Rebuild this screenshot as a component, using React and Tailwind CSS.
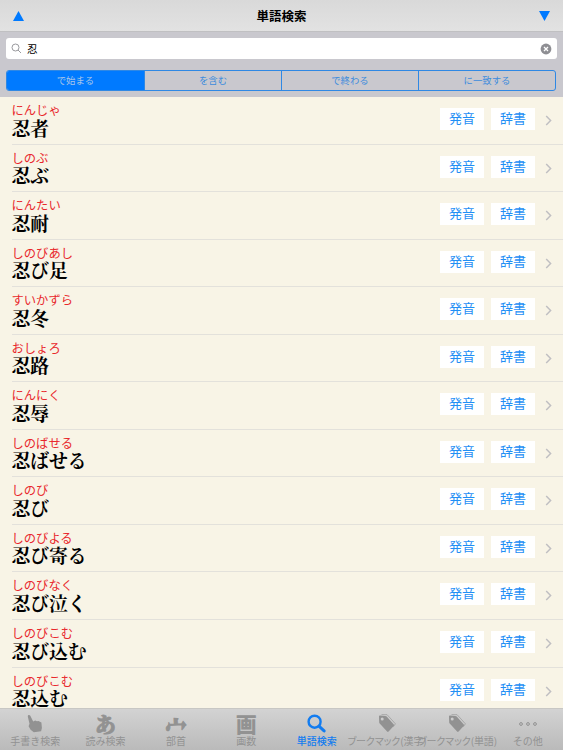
import { useState } from 'react';
import clsx from 'clsx';

const WORDS = [
  ['にんじゃ', '忍者'],
  ['しのぶ', '忍ぶ'],
  ['にんたい', '忍耐'],
  ['しのびあし', '忍び足'],
  ['すいかずら', '忍冬'],
  ['おしょろ', '忍路'],
  ['にんにく', '忍辱'],
  ['しのばせる', '忍ばせる'],
  ['しのび', '忍び'],
  ['しのびよる', '忍び寄る'],
  ['しのびなく', '忍び泣く'],
  ['しのびこむ', '忍び込む'],
  ['しのびこむ', '忍込む'],
];

const SCOPES = ['で始まる', 'を含む', 'で終わる', 'に一致する'];

function HandIcon() {
  return (
    <svg width="16" height="19" viewBox="0 0 16 19" fill="currentColor">
      <path d="M1.200 1.300C1.900.6 2.800.9 3.300 1.800L6.200 7.400l2-.9 1.700.7 1.600-.1 2.900 1.500.5 5.500-.8 3.200-7.300 1-3.200-2.500-2-3.600.9-2.400L.9 2.900C.6 2.200.8 1.700 1.200 1.300z" />
    </svg>
  );
}

function SearchIcon() {
  return (
    <svg width="19" height="19" viewBox="0 0 19 19" fill="none" stroke="currentColor">
      <circle cx="7.600" cy="7.700" r="6" strokeWidth="2.400" />
      <path d="M12.200 12.400l4.900 4.500" strokeWidth="3" strokeLinecap="round" />
    </svg>
  );
}

function TagIcon() {
  return (
    <svg width="18" height="19" viewBox="0 0 18 19" fill="currentColor">
      <path d="M3.500.6l5.600.1 8.300 9.100-2 2.900" fill="none" stroke="currentColor" strokeWidth=".9" opacity=".7" />
      <path fillRule="evenodd" d="M1 2.600c0-.6.4-1 1-1l5.300.3c.6 0 1 .2 1.400.6l7.100 8c.4.5.4 1-.1 1.500l-5.100 5.600c-.5.5-1 .5-1.500 0L1.700 9.500c-.4-.4-.5-.8-.5-1.300zM4.200 3.600a1.500 1.500 0 100 3 1.500 1.500 0 000-3z" />
    </svg>
  );
}

function MoreIcon() {
  return (
    <svg width="20" height="19" viewBox="0 0 20 19" fill="none" stroke="currentColor" strokeWidth="1">
      <circle cx="3" cy="10" r="1.400" />
      <circle cx="10" cy="10" r="1.400" />
      <circle cx="17" cy="10" r="1.400" />
    </svg>
  );
}

function Glyph({ brush, className, children }) {
  return (
    <span
      className={clsx(
        'text-[21px] leading-[19px] font-black',
        brush && "font-['Hiragino_Mincho_ProN','Noto_Serif_CJK_JP','Noto_Sans_CJK_JP',serif] [-webkit-text-stroke:0.9px_#929292]",
        className
      )}
    >
      {children}
    </span>
  );
}

const TABS = [
  { label: '手書き検索', icon: <HandIcon /> },
  { label: '読み検索', icon: <Glyph brush>あ</Glyph> },
  { label: '部首', icon: <Glyph brush className="origin-top scale-y-140 -rotate-3">宀</Glyph> },
  { label: '画数', icon: <Glyph>画</Glyph> },
  { label: '単語検索', icon: <SearchIcon />, active: true },
  { label: 'ブークマック(漢字)', icon: <TagIcon />, tight: true },
  { label: 'ブークマック(単語)', icon: <TagIcon />, tight: true },
  { label: 'その他', icon: <MoreIcon /> },
];

function WordRow({ reading, word }) {
  return (
    <li className="h-[47.55px] shrink-0 pl-3">
      <div className="flex h-full border-b border-[#e3e1db] pr-[11px]">
        <div className="-ml-[0.5px] flex-1 pt-[5px] whitespace-nowrap">
          <p className="text-[12.3px] leading-[17px] text-[#e8282c]">{reading}</p>
          <p className="-mt-[1.5px] font-['Hiragino_Mincho_ProN','Noto_Serif_CJK_JP','Noto_Sans_CJK_JP',serif] text-[18.8px] leading-[20px] font-bold text-black">{word}</p>
        </div>
        <div className="flex gap-[7px] pt-[11px]">
          <button className="h-[22px] w-11 bg-white pb-[3px] text-[13px] leading-[19px] text-[#1f8ff5]">発音</button>
          <button className="h-[22px] w-11 bg-white pb-[3px] text-[13px] leading-[19px] text-[#1f8ff5]">辞書</button>
        </div>
        <svg className="mt-[18px] ml-[10px]" width="7" height="11" viewBox="0 0 7 11" fill="none" stroke="#c0bfc2" strokeWidth="1.500">
          <path d="M1.200 1l4.400 4.500-4.400 4.500" />
        </svg>
      </div>
    </li>
  );
}

export default function App() {
  const [scope, setScope] = useState(0);
  const [query, setQuery] = useState('忍');

  return (
    <div className="flex h-[750px] w-[563px] flex-col overflow-hidden bg-[#f8f4e6] font-['Noto_Sans_CJK_JP',sans-serif]">
      <header className="flex h-8 shrink-0 items-center justify-between border-b border-[#c0c0c2] bg-linear-to-b from-[#d9d9d9] to-[#e2e2e2] px-[13px]">
        <svg width="11" height="10" viewBox="0 0 11 10" fill="#007aff"><path d="M5.500 0L11 10H0z" /></svg>
        <h1 className="pt-px text-[12.5px] font-bold text-black">単語検索</h1>
        <svg className="mt-px" width="11" height="10" viewBox="0 0 11 10" fill="#007aff"><path d="M0 0h11L5.500 10z" /></svg>
      </header>

      <div className="h-[65px] shrink-0 bg-[#c9c8ce] px-1.5 pt-1.5">
        <div className="flex h-[21px] items-center rounded-[3px] bg-white px-[5px]">
          <svg width="11" height="11" viewBox="0 0 11 11" fill="none" stroke="#8e8e93" strokeWidth=".9">
            <circle cx="4.500" cy="4.500" r="3.500" />
            <path d="M7 7l3 3" />
          </svg>
          <input
            className="ml-[5px] h-[20px] min-w-0 flex-1 pb-px text-[10.5px] leading-[19px] text-black outline-none"
            value={query}
            onChange={(e) => setQuery(e.target.value)}
          />
          <button onClick={() => setQuery('')} aria-label="クリア">
            <svg width="12" height="12" viewBox="0 0 12 12">
              <circle cx="6" cy="6" r="5.400" fill="#8e8e93" />
              <path d="M4 4l4 4M8 4l-4 4" stroke="#fff" strokeWidth="1.300" />
            </svg>
          </button>
        </div>
        <div className="mt-[11px] mr-px grid h-[21px] grid-cols-4 overflow-hidden rounded-[3px] border border-[#2f88e4]">
          {SCOPES.map((label, i) => (
            <button
              key={label}
              onClick={() => setScope(i)}
              className={clsx(
                'pb-px text-[9.400px] leading-[18px]',
                i > 0 && 'border-l border-[#2f88e4]',
                i === scope ? 'bg-[#007aff] text-[#a9c6ea]' : 'text-[#3c8bdd]'
              )}
            >
              {label}
            </button>
          ))}
        </div>
      </div>

      <ul className="flex min-h-0 flex-1 flex-col overflow-hidden">
        {WORDS.map(([reading, word]) => (
          <WordRow key={word} reading={reading} word={word} />
        ))}
      </ul>

      <nav className="grid h-[42px] shrink-0 grid-cols-8 border-t border-[#c8c7c4] bg-linear-to-b from-[#d3d3d3] to-[#bababa]">
        {TABS.map(({ label, icon, active, tight }) => (
          <button
            key={label}
            className={clsx(
              'flex min-w-0 flex-col items-center pt-[5px] whitespace-nowrap',
              active ? 'font-medium text-[#127cf0]' : 'text-[#929292]'
            )}
          >
            <span className="flex h-[19px] items-center">{icon}</span>
            <span className={clsx('text-[10px] leading-[15px]', tight && "tracking-[-0.1px] [font-feature-settings:'palt']")}>{label}</span>
          </button>
        ))}
      </nav>
    </div>
  );
}
